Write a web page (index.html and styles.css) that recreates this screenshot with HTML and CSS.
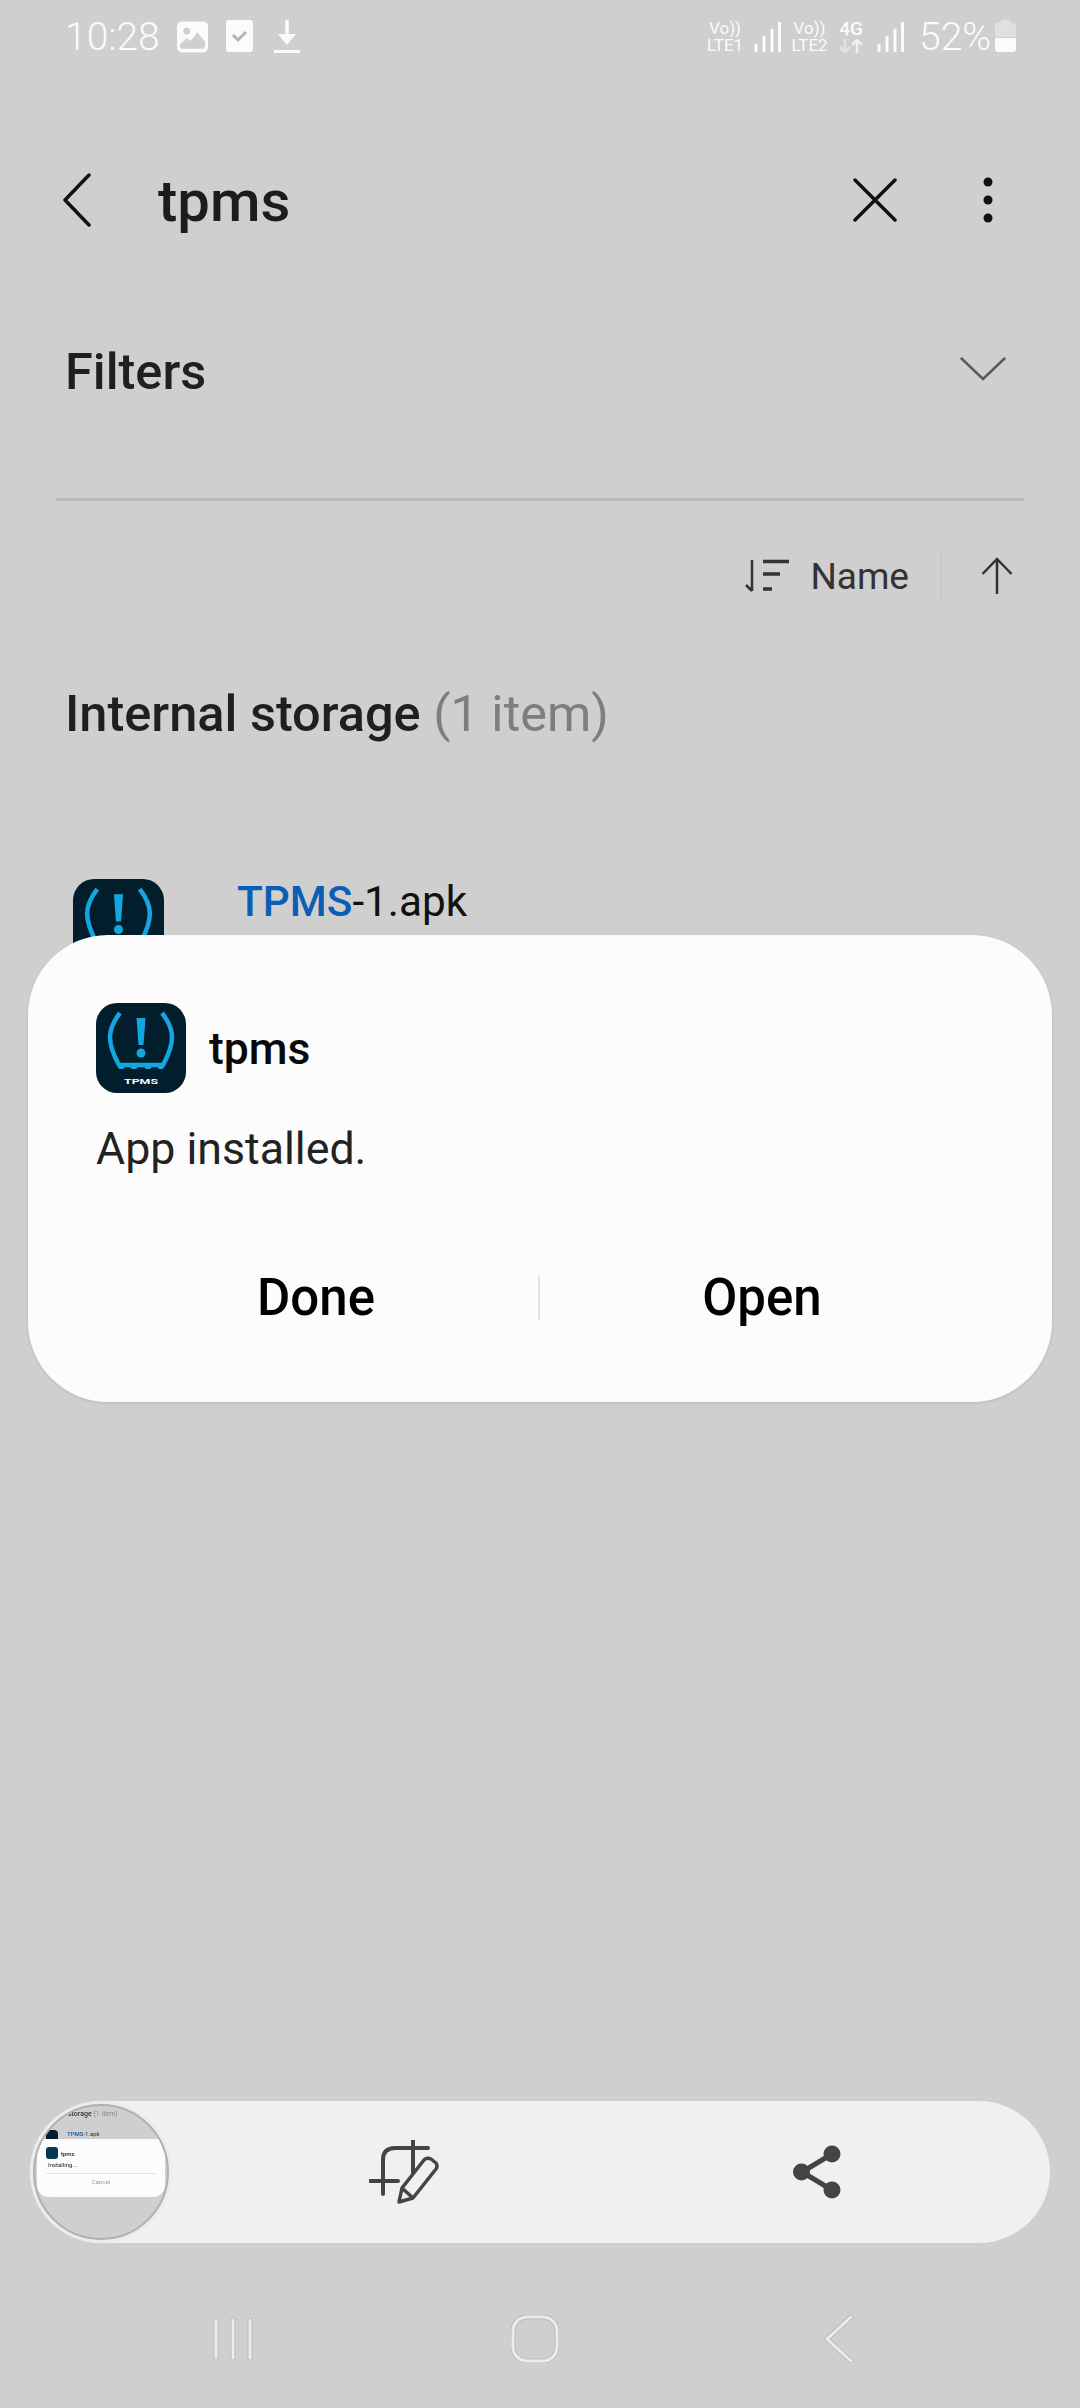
FILE: index.html
```html
<!DOCTYPE html>
<html lang="en">
<head>
    <meta charset="UTF-8">
    <meta name="viewport" content="width=device-width, initial-scale=1.0">
    <title>tpms</title>
    <link rel="stylesheet" href="styles.css">
</head>
<body>
    <svg class="defs">
        <symbol id="tpms-icon" viewBox="0 0 90 90">
            <rect width="90" height="90" rx="21" fill="#021d2b"/>
            <path d="M24 10 C17 19 14 27 14 34 C14 44 18 53 23 62 L67 62 C72 53 76 44 76 34 C76 27 73 19 66 10" fill="none" stroke="#14a6e0" stroke-width="4.5"/>
            <path d="M21 62 H69 L67 66 H63 L61 64 H56 L54 66 H50 L48 64 H42 L40 66 H36 L34 64 H29 L27 66 H23 Z" fill="#14a6e0"/>
            <path d="M40.500 15 H49.500 L47.500 42 H42.500 Z" fill="#14a6e0"/>
            <circle cx="45" cy="50" r="4.500" fill="#14a6e0"/>
            <text x="45" y="81" text-anchor="middle" textLength="34" lengthAdjust="spacingAndGlyphs" class="icon-label">TPMS</text>
        </symbol>
    </svg>

    <div class="status-bar">
        <div class="status-left">
            <span class="clock">10:28</span>
            <svg class="st-image" width="31" height="32" viewBox="0 0 32 32">
                <rect width="32" height="32" rx="5" fill="#fbfbfb"/>
                <circle cx="10" cy="10" r="3.500" fill="#cfcfcf"/>
                <path d="M3 24 L10 17 L14 20 L21 11 L29 21 V25 Q29 28 26 28 H6 Q3 28 3 25 Z" fill="#cfcfcf"/>
            </svg>
            <svg class="st-check" width="27" height="32" viewBox="0 0 27 32">
                <rect width="27" height="32" rx="3" fill="#fbfbfb"/>
                <path d="M7 15 L12 20 L20 12" fill="none" stroke="#b5b5b5" stroke-width="3"/>
            </svg>
            <svg class="st-down" width="26" height="33" viewBox="0 0 26 33">
                <path d="M13 0 V18" stroke="#fbfbfb" stroke-width="3.500"/>
                <path d="M4 14 H22 L13 25 Z" fill="#fbfbfb"/>
                <path d="M0 31.500 H26" stroke="#fbfbfb" stroke-width="3"/>
            </svg>
        </div>
        <div class="status-right">
            <div class="net"><span>Vo))</span><span>LTE1</span></div>
            <svg class="bars" width="27" height="30" viewBox="0 0 27 30">
                <path d="M2 23 V29 M10 15 V29 M18 8 V29 M25.500 1 V29" stroke="#fbfbfb" stroke-width="3" stroke-linecap="round"/>
            </svg>
            <div class="net net-two"><span>Vo))</span><span>LTE2</span></div>
            <div class="net net-data">
                <span>4G</span>
                <svg width="24" height="14" viewBox="0 0 24 14">
                    <path d="M6 0 V13 M1 8 L6 13 L11 8" fill="none" stroke="#e2e2e2" stroke-width="2.500"/>
                    <path d="M18 14 V1 M13 6 L18 1 L23 6" fill="none" stroke="#f0f0f0" stroke-width="2.500"/>
                </svg>
            </div>
            <svg class="bars" width="27" height="30" viewBox="0 0 27 30">
                <path d="M2 23 V29 M10 15 V29 M18 8 V29 M25.500 1 V29" stroke="#fbfbfb" stroke-width="3" stroke-linecap="round"/>
            </svg>
            <span class="battery-pct">52%</span>
            <svg class="battery" width="21" height="32" viewBox="0 0 21 32">
                <path d="M6 0 H15 V3 H18 Q21 3 21 6 V17 H0 V6 Q0 3 3 3 H6 Z" fill="#e0e0e0"/>
                <path d="M0 18 H21 V29 Q21 32 18 32 H3 Q0 32 0 29 Z" fill="#fbfbfb"/>
            </svg>
        </div>
    </div>

    <div class="search-row">
        <svg class="icon-back" width="30" height="54" viewBox="0 0 30 54">
            <path d="M27 2 L3 27 L27 52" fill="none" stroke="#111" stroke-width="3.500" stroke-linecap="round" stroke-linejoin="round"/>
        </svg>
        <span class="query">tpms</span>
        <svg class="icon-close" width="44" height="44" viewBox="0 0 44 44">
            <path d="M2 2 L42 42 M42 2 L2 42" stroke="#111" stroke-width="3.500" stroke-linecap="round"/>
        </svg>
        <svg class="icon-more" width="10" height="46" viewBox="0 0 10 46">
            <circle cx="5" cy="5" r="4.500" fill="#111"/>
            <circle cx="5" cy="23" r="4.500" fill="#111"/>
            <circle cx="5" cy="41" r="4.500" fill="#111"/>
        </svg>
    </div>

    <div class="filters">
        <span>Filters</span>
        <svg width="46" height="24" viewBox="0 0 46 24">
            <path d="M1.500 1.500 L23 22 L44.500 1.500" fill="none" stroke="#5a5a5a" stroke-width="2.500" stroke-linecap="round"/>
        </svg>
    </div>
    <div class="rule"></div>

    <div class="sort-row">
        <svg class="sort-icon" width="44" height="34" viewBox="0 0 44 34">
            <path d="M7 1 V32 M1 26 L7 32" fill="none" stroke="#333" stroke-width="2.500"/>
            <path d="M18 2.500 H44 M18 15 H35 M18 30 H27" stroke="#333" stroke-width="3.500"/>
        </svg>
        <span class="sort-name">Name</span>
        <span class="sort-sep"></span>
        <svg class="sort-arrow" width="32" height="38" viewBox="0 0 32 38">
            <path d="M16 2 V37 M1.500 17 L16 2 L30.500 17" fill="none" stroke="#333" stroke-width="2.500"/>
        </svg>
    </div>

    <h2 class="section-title">Internal storage <span>(1 item)</span></h2>

    <div class="file-row">
        <svg class="file-icon" width="91" height="91"><use href="#tpms-icon"/></svg>
        <div class="file-name"><b>TPMS</b>-1.apk</div>
    </div>

    <div class="dialog">
        <div class="dialog-app">
            <svg width="90" height="90"><use href="#tpms-icon"/></svg>
            <span>tpms</span>
        </div>
        <p class="dialog-msg">App installed.</p>
        <div class="dialog-actions">
            <button>Done</button>
            <span class="action-sep"></span>
            <button>Open</button>
        </div>
    </div>

    <div class="capture-bar">
        <div class="thumb">
            <div class="thumb-title">storage <span>(1 item)</span></div>
            <div class="thumb-file"><i></i><span><b>TPMS</b>-1.apk</span></div>
            <div class="thumb-card">
                <div class="thumb-app"><i></i><span>tpms</span></div>
                <div class="thumb-msg">Installing...</div>
                <div class="thumb-progress"></div>
                <div class="thumb-cancel">Cancel</div>
            </div>
        </div>
        <svg class="crop-icon" width="70" height="64" viewBox="0 0 70 64">
            <path d="M1 41 H29 M14 28 V54 M14 41 V20 Q14 8 26 8 H59 M44 0 V37" fill="none" stroke="#444" stroke-width="4" stroke-linecap="round"/>
            <path d="M30 62 L33 48 L55 20 Q58 17 62 19 L67 23 Q69 26 67 29 L44 58 Z M33 48 L44 58" fill="#f0f0f0" stroke="#444" stroke-width="3.500" stroke-linejoin="round"/>
        </svg>
        <svg class="share-icon" width="48" height="54" viewBox="0 0 48 54">
            <path d="M39 9 L9 27 L39 45" fill="none" stroke="#444" stroke-width="5"/>
            <circle cx="39" cy="9" r="8.500" fill="#444"/>
            <circle cx="8.500" cy="27" r="8.500" fill="#444"/>
            <circle cx="39" cy="45" r="8.500" fill="#444"/>
        </svg>
    </div>

    <div class="nav-bar">
        <svg class="nav-recent" width="42" height="42" viewBox="0 0 42 42">
            <path d="M4 2 V40 M21 2 V40 M38 2 V40" stroke="#bbb" stroke-width="5" stroke-linecap="round"/>
            <path d="M4 2 V40 M21 2 V40 M38 2 V40" stroke="#ececec" stroke-width="3" stroke-linecap="round"/>
        </svg>
        <svg class="nav-home" width="48" height="48" viewBox="0 0 48 48">
            <rect x="2" y="2" width="44" height="44" rx="14" fill="none" stroke="#bbb" stroke-width="5"/>
            <rect x="2" y="2" width="44" height="44" rx="14" fill="none" stroke="#ececec" stroke-width="3"/>
        </svg>
        <svg class="nav-back" width="30" height="48" viewBox="0 0 30 48">
            <path d="M27 2 L3 24 L27 46" fill="none" stroke="#bbb" stroke-width="5" stroke-linecap="round"/>
            <path d="M27 2 L3 24 L27 46" fill="none" stroke="#ececec" stroke-width="3" stroke-linecap="round"/>
        </svg>
    </div>
</body>
</html>
```

FILE: styles.css
```css
* {
    margin: 0;
    padding: 0;
    box-sizing: border-box;
    font-family: Roboto, "Noto Sans", sans-serif;
}

html, body {
    width: 1080px;
    height: 2408px;
    overflow: hidden;
}

body {
    position: relative;
    background-color: #cfcfcf;
    display: flex;
    flex-direction: column;
    color: #1f1f1f;
}

.defs {
    display: none;
}

.icon-label {
    font-size: 8px;
    font-weight: 700;
    fill: #fff;
}

/* status bar */
.status-bar {
    height: 70px;
    padding: 20px 64px 0 65px;
    display: flex;
    justify-content: space-between;
    align-items: flex-start;
    color: #fbfbfb;
}

.status-left, .status-right {
    display: flex;
    align-items: flex-start;
}

.clock {
    font-size: 39px;
    font-weight: 300;
    line-height: 34px;
    width: 95px;
    white-space: nowrap;
}

.st-image {
    margin: 1px 0 0 17px;
}

.st-check {
    margin-left: 18px;
}

.st-down {
    margin-left: 21px;
}

.net {
    display: flex;
    flex-direction: column;
    align-items: center;
    font-size: 17px;
    line-height: 17px;
    width: 38px;
}

.net-two {
    width: 41px;
    margin-left: 8px;
}

.net-data {
    width: 26px;
    margin-left: 8px;
    font-size: 19px;
    font-weight: 500;
}

.net-data svg {
    margin-top: 2px;
}

.bars {
    margin: 2px 0 0 10px;
}

.net-data + .bars {
    margin-left: 13px;
}

.battery-pct {
    font-size: 39px;
    line-height: 34px;
    font-weight: 300;
    width: 70px;
    margin-left: 15px;
    white-space: nowrap;
}

.battery {
    margin-left: 6px;
}

/* search header */
.search-row {
    height: 100px;
    margin-top: 80px;
    padding-left: 62px;
    display: flex;
    align-items: center;
}

.query {
    font-size: 58px;
    font-weight: 500;
    color: #1c1c1c;
    margin-left: 66px;
    padding-top: 2px;
    flex: 1;
}

.icon-close {
    margin-right: 86px;
}

.icon-more {
    margin-right: 87px;
}

.filters {
    height: 60px;
    margin-top: 91px;
    padding: 0 74px 0 65px;
    display: flex;
    justify-content: space-between;
    align-items: center;
    font-size: 50.5px;
    font-weight: 500;
}

.filters svg {
    margin-top: -4px;
}

.rule {
    height: 3px;
    margin: 97px 56px 0;
    background: #b9b9b9;
}

.sort-row {
    height: 50px;
    margin-top: 50px;
    padding-right: 67px;
    display: flex;
    justify-content: flex-end;
    align-items: center;
    color: #333;
}

.sort-name {
    font-size: 37px;
    margin-left: 21px;
}

.sort-sep {
    width: 1px;
    height: 46px;
    background: #c2c2c2;
    margin: 0 39px 0 32px;
}

.section-title {
    margin-top: 83px;
    padding-left: 65px;
    font-size: 50.5px;
    line-height: 60px;
    font-weight: 500;
}

.section-title span {
    font-weight: 400;
    color: #7e7e7e;
}

.file-row {
    margin-top: 135px;
    padding-left: 73px;
    display: flex;
}

.file-icon {
    flex: none;
}

.file-name {
    margin-left: 73px;
    font-size: 42.3px;
    line-height: 50px;
    color: #111;
    margin-top: -2px;
}

.file-name b {
    font-weight: 500;
    color: #0a5eb5;
}

/* dialog lies over the file list */
.dialog {
    position: absolute;
    left: 28px;
    top: 935px;
    width: 1024px;
    height: 467px;
    background: #fcfcfc;
    border-radius: 80px;
    box-shadow: 0 1px 3px rgba(0, 0, 0, 0.12);
    padding: 68px 68px 0;
}

.dialog-app {
    display: flex;
    align-items: center;
    font-size: 44.5px;
    font-weight: 500;
    color: #0a0a0a;
}

.dialog-app span {
    margin-left: 23px;
    padding-top: 2px;
}

.dialog-msg {
    margin-top: 31px;
    font-size: 44.7px;
    line-height: 50px;
    color: #222;
}

.dialog-actions {
    margin: 93px -68px 0;
    display: flex;
    align-items: center;
    height: 60px;
}

.dialog-actions button {
    flex: 1;
    background: none;
    border: none;
    font-size: 51px;
    font-weight: 500;
    color: #000;
}

.dialog-actions button:first-child {
    padding-left: 66px;
}

.dialog-actions button:last-child {
    padding-right: 68px;
}

.action-sep {
    width: 2px;
    height: 45px;
    background: #e4e4e4;
}

/* screenshot toolbar */
.capture-bar {
    position: absolute;
    left: 30px;
    top: 2101px;
    width: 1020px;
    height: 142px;
    background: #f0f0f0;
    border-radius: 71px;
    display: flex;
    align-items: center;
}

.thumb {
    width: 136px;
    height: 136px;
    flex: none;
    margin-left: 3px;
    border-radius: 50%;
    background: #cfcfcf;
    border: 2px solid #b0b0b0;
    box-shadow: 0 0 0 3px #ececec;
    overflow: hidden;
    position: relative;
}

.thumb-title {
    font-size: 7px;
    font-weight: 500;
    padding: 4px 0 0 33px;
    color: #333;
    filter: blur(0.5px);
}

.thumb-title span {
    color: #888;
    font-weight: 400;
}

.thumb-file {
    display: flex;
    font-size: 6px;
    margin: 12px 0 0 11px;
    color: #333;
    filter: blur(0.5px);
}

.thumb-file i {
    width: 12px;
    height: 12px;
    border-radius: 4px;
    background: #021d2b;
}

.thumb-file span {
    margin-left: 9px;
}

.thumb-file b {
    color: #0a5eb5;
    font-weight: 500;
}

.thumb-card {
    position: absolute;
    left: 2px;
    top: 33px;
    width: 128px;
    height: 58px;
    background: #fcfcfc;
    border-radius: 0 0 12px 12px;
    padding: 8px 9px;
    font-size: 6px;
    color: #222;
}

.thumb-app {
    display: flex;
    align-items: center;
    font-weight: 500;
    filter: blur(0.4px);
}

.thumb-app i {
    width: 12px;
    height: 12px;
    background: #07384f;
    border-radius: 3px;
    margin-right: 3px;
}

.thumb-msg {
    margin-top: 2px;
    margin-left: 2px;
    filter: blur(0.4px);
}

.thumb-progress {
    height: 1px;
    background: #e4e4e4;
    margin-top: 5px;
}

.thumb-cancel {
    text-align: center;
    color: #999;
    margin-top: 4px;
    filter: blur(0.4px);
}

.crop-icon {
    margin-left: 200px;
}

.share-icon {
    margin-left: 354px;
}

/* nav buttons */
.nav-bar {
    position: absolute;
    left: 0;
    right: 0;
    top: 2315px;
    height: 48px;
    display: flex;
    align-items: center;
    padding-left: 212px;
}

.nav-home {
    margin-left: 257px;
}

.nav-back {
    margin-left: 265px;
}
```
